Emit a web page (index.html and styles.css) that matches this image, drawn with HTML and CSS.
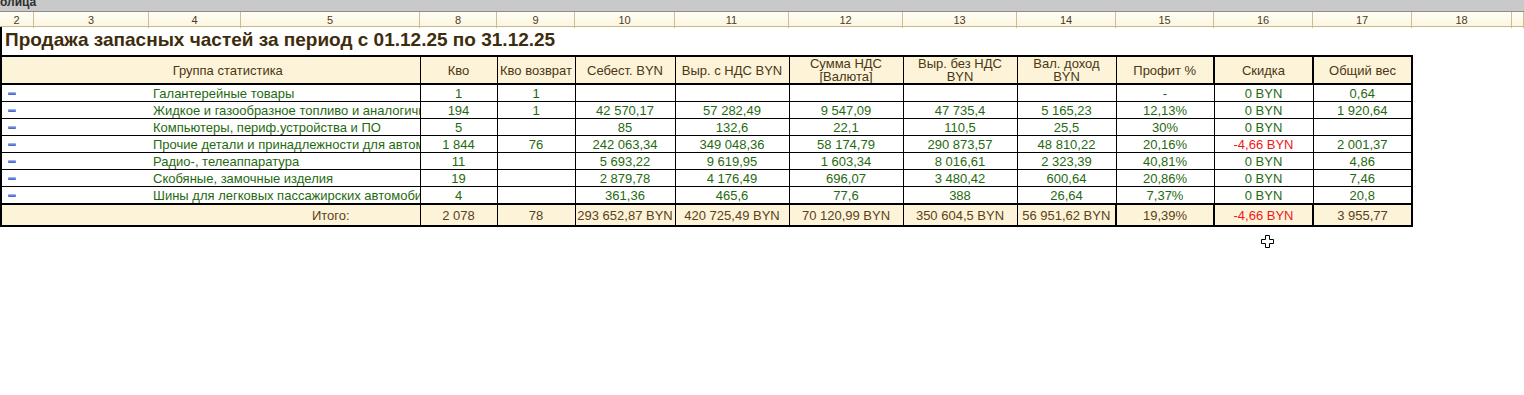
FILE: index.html
```html
<!DOCTYPE html>
<html lang="ru">
<head>
<meta charset="utf-8">
<title>Продажа запасных частей</title>
<link rel="stylesheet" href="styles.css">
</head>
<body>
<div class="topbar"><span class="tb-title">олица</span></div>
<div class="ruler">
  <div class="rc">2</div><div class="rc">3</div><div class="rc">4</div><div class="rc">5</div>
  <div class="rc">8</div><div class="rc">9</div><div class="rc">10</div><div class="rc">11</div>
  <div class="rc">12</div><div class="rc">13</div><div class="rc">14</div><div class="rc">15</div>
  <div class="rc">16</div><div class="rc">17</div><div class="rc">18</div><div class="rc"></div>
</div>
<div class="title">Продажа запасных частей за период с 01.12.25 по 31.12.25</div>
<table class="report">
  <colgroup>
    <col class="w-group"><col class="w77"><col class="w78"><col class="w100"><col class="w114"><col class="w114"><col class="w114"><col class="w99"><col class="w98"><col class="w99"><col class="w99">
  </colgroup>
  <thead>
    <tr class="hdr">
      <th class="h-group">Группа статистика</th>
      <th>Кво</th>
      <th>Кво возврат</th>
      <th>Себест. BYN</th>
      <th>Выр. с НДС BYN</th>
      <th>Сумма НДС<br>[Валюта]</th>
      <th>Выр. без НДС<br>BYN</th>
      <th>Вал. доход<br>BYN</th>
      <th>Профит %</th>
      <th class="thick">Скидка</th>
      <th class="thick">Общий вес</th>
    </tr>
  </thead>
  <tbody>
    <tr>
      <td class="grp"><div class="gcell"><span class="ic"><i class="minus"></i></span><span class="gname">Галантерейные товары</span></div></td>
      <td>1</td><td>1</td><td></td><td></td><td></td><td></td><td></td><td>-</td><td>0 BYN</td><td>0,64</td>
    </tr>
    <tr>
      <td class="grp"><div class="gcell"><span class="ic"><i class="minus"></i></span><span class="gname">Жидкое и газообразное топливо и аналогичные продукты</span></div></td>
      <td>194</td><td>1</td><td>42 570,17</td><td>57 282,49</td><td>9 547,09</td><td>47 735,4</td><td>5 165,23</td><td>12,13%</td><td>0 BYN</td><td>1 920,64</td>
    </tr>
    <tr>
      <td class="grp"><div class="gcell"><span class="ic"><i class="minus"></i></span><span class="gname">Компьютеры, периф.устройства и ПО</span></div></td>
      <td>5</td><td></td><td>85</td><td>132,6</td><td>22,1</td><td>110,5</td><td>25,5</td><td>30%</td><td>0 BYN</td><td></td>
    </tr>
    <tr>
      <td class="grp"><div class="gcell"><span class="ic"><i class="minus"></i></span><span class="gname">Прочие детали и принадлежности для автомобилей</span></div></td>
      <td>1 844</td><td>76</td><td>242 063,34</td><td>349 048,36</td><td>58 174,79</td><td>290 873,57</td><td>48 810,22</td><td>20,16%</td><td class="neg">-4,66 BYN</td><td>2 001,37</td>
    </tr>
    <tr>
      <td class="grp"><div class="gcell"><span class="ic"><i class="minus"></i></span><span class="gname">Радио-, телеаппаратура</span></div></td>
      <td>11</td><td></td><td>5 693,22</td><td>9 619,95</td><td>1 603,34</td><td>8 016,61</td><td>2 323,39</td><td>40,81%</td><td>0 BYN</td><td>4,86</td>
    </tr>
    <tr>
      <td class="grp"><div class="gcell"><span class="ic"><i class="minus"></i></span><span class="gname">Скобяные, замочные изделия</span></div></td>
      <td>19</td><td></td><td>2 879,78</td><td>4 176,49</td><td>696,07</td><td>3 480,42</td><td>600,64</td><td>20,86%</td><td>0 BYN</td><td>7,46</td>
    </tr>
    <tr>
      <td class="grp"><div class="gcell"><span class="ic"><i class="minus"></i></span><span class="gname">Шины для легковых пассажирских автомобилей</span></div></td>
      <td>4</td><td></td><td>361,36</td><td>465,6</td><td>77,6</td><td>388</td><td>26,64</td><td>7,37%</td><td>0 BYN</td><td>20,8</td>
    </tr>
  </tbody>
  <tfoot>
    <tr class="total">
      <td class="t-group"><span class="t-label">Итого:</span></td>
      <td>2 078</td><td>78</td><td>293 652,87 BYN</td><td>420 725,49 BYN</td><td>70 120,99 BYN</td><td>350 604,5 BYN</td><td>56 951,62 BYN</td><td class="thick">19,39%</td><td class="thick neg">-4,66 BYN</td><td class="thick">3 955,77</td>
    </tr>
  </tfoot>
</table>
<svg class="cursor" width="13" height="13" viewBox="0 0 13 13" aria-hidden="true">
  <path d="M4.5 0.5h4v4h4v4h-4v4h-4v-4h-4v-4h4z" fill="#fff" stroke="#000" stroke-width="1"/>
</svg>
</body>
</html>
```

FILE: styles.css
```css
html, body {
  margin: 0;
  padding: 0;
  background: #ffffff;
}
body {
  position: relative;
  width: 1524px;
  height: 395px;
  overflow: hidden;
  font-family: "Liberation Sans", Arial, sans-serif;
}
.topbar {
  height: 11px;
  background: #c9c9c9;
  border-bottom: 1px solid #8c8c8c;
  overflow: hidden;
}
.tb-title {
  display: block;
  font-size: 12px;
  font-weight: bold;
  line-height: 11px;
  margin-top: -3px;
  color: #2e2e2e;
}
.ruler {
  display: grid;
  grid-template-columns: 34px 115px 92px 179px 77px 78px 100px 114px 114px 114px 99px 98px 99px 99px 100px 1fr;
  height: 14px;
  background: linear-gradient(#fffef6, #fbf6de);
  border-bottom: 1px solid #c8b98c;
}
.rc {
  border-right: 1px solid #cdbf95;
  font-size: 11px;
  line-height: 16px;
  text-align: center;
  color: #4a3b2a;
}
.title {
  height: 28px;
  box-sizing: border-box;
  border-left: 2px solid #000;
  padding-left: 3px;
  font-size: 19px;
  font-weight: bold;
  line-height: 25px;
  color: #3e2d0c;
}
.report {
  border-collapse: collapse;
  table-layout: fixed;
  width: 1412px;
  font-size: 13px;
  color: #1f6a10;
}
.w-group { width: 419px; }
.w77 { width: 77px; }
.w78 { width: 78px; }
.w100 { width: 100px; }
.w114 { width: 114px; }
.w99 { width: 99px; }
.w98 { width: 98px; }
.report th,
.report td {
  border: 1px solid #000;
  padding: 0;
  text-align: center;
  white-space: nowrap;
  overflow: hidden;
}
.report td {
  height: 16px;
  line-height: 15px;
}
.hdr th {
  height: 26px;
  background: #fdf3d9;
  font-weight: normal;
  color: #4a3713;
  line-height: 13px;
  border-top: 2px solid #000;
  border-bottom: 2px solid #000;
  vertical-align: middle;
}
.hdr th:first-child {
  border-left: 2px solid #000;
}
.report .thick {
  border-left: 2px solid #000;
  border-right: 2px solid #000;
}
.h-group {
  padding-left: 34px !important;
}
.report td.grp {
  text-align: left;
}
.gcell {
  display: flex;
  align-items: center;
  height: 16px;
  overflow: hidden;
}
.ic {
  flex: 0 0 147px;
  display: flex;
  align-items: center;
  padding-left: 6px;
  box-sizing: border-box;
}
.minus {
  display: block;
  width: 8px;
  height: 3px;
  border-radius: 1px;
  background: linear-gradient(#b3c6f2, #5a78dc 60%, #3d5dc4);
}
.gname {
  flex: 1 1 auto;
  min-width: 0;
  padding-left: 4px;
  white-space: nowrap;
  overflow: hidden;
}
.report td:last-child {
  border-right: 2px solid #000;
}
.report tbody td.grp {
  border-left: 2px solid #000;
}
.total td {
  height: 20px;
  background: #fdf3d9;
  color: #5a4218;
  border-top: 2px solid #000;
  border-bottom: 2px solid #000;
}
.total td.t-group {
  border-left: 2px solid #000;
  padding-left: 240px;
  text-align: center;
}
.report .neg {
  color: #f01818;
}
.cursor {
  position: absolute;
  left: 1261px;
  top: 235px;
}
```
